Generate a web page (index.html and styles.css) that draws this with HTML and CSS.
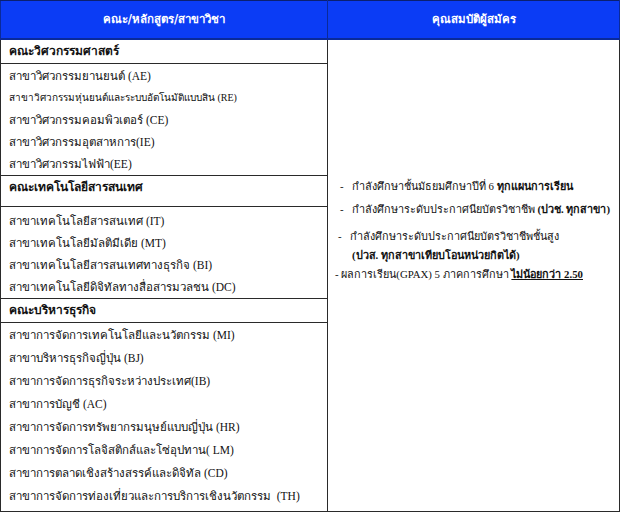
FILE: index.html
```html
<!DOCTYPE html>
<html lang="th">
<head>
<meta charset="utf-8">
<title>คณะ/หลักสูตร/สาขาวิชา</title>
<link rel="stylesheet" href="styles.css">
</head>
<body>
<table class="grid">
  <colgroup><col class="col-left"><col class="col-right"></colgroup>
  <thead>
    <tr>
      <th class="head">คณะ/หลักสูตร/สาขาวิชา</th>
      <th class="head">คุณสมบัติผู้สมัคร</th>
    </tr>
  </thead>
  <tbody>
    <tr>
      <td class="fac"><div class="fac-in">คณะวิศวกรรมศาสตร์</div></td>
      <td class="qual" rowspan="6">
        <ul class="qlist">
          <li class="q1">-&nbsp;&nbsp; กำลังศึกษาชั้นมัธยมศึกษาปีที่ 6 <b>ทุกแผนการเรียน</b></li>
          <li class="q2">-&nbsp;&nbsp; กำลังศึกษาระดับประกาศนียบัตรวิชาชีพ <b>(ปวช. ทุกสาขา)</b></li>
          <li class="q3">-&nbsp;&nbsp; กำลังศึกษาระดับประกาศนียบัตรวิชาชีพชั้นสูง</li>
          <li class="q4"><b>(ปวส. ทุกสาขาเทียบโอนหน่วยกิตได้)</b></li>
          <li class="q5">- ผลการเรียน(GPAX) 5 ภาคการศึกษา <b class="ul">ไม่น้อยกว่า 2.50</b></li>
        </ul>
      </td>
    </tr>
    <tr>
      <td class="progs"><div class="plist eng">
        <div class="p">สาขาวิศวกรรมยานยนต์ (AE)</div>
        <div class="p small">สาขาวิศวกรรมหุ่นยนต์และระบบอัตโนมัติแบบสิน (RE)</div>
        <div class="p">สาขาวิศวกรรมคอมพิวเตอร์ (CE)</div>
        <div class="p">สาขาวิศวกรรมอุตสาหการ(IE)</div>
        <div class="p">สาขาวิศวกรรมไฟฟ้า(EE)</div>
      </div></td>
    </tr>
    <tr>
      <td class="fac"><div class="fac-in tall">คณะเทคโนโลยีสารสนเทศ</div></td>
    </tr>
    <tr>
      <td class="progs"><div class="plist it">
        <div class="p">สาขาเทคโนโลยีสารสนเทศ (IT)</div>
        <div class="p">สาขาเทคโนโลยีมัลติมีเดีย (MT)</div>
        <div class="p">สาขาเทคโนโลยีสารสนเทศทางธุรกิจ (BI)</div>
        <div class="p">สาขาเทคโนโลยีดิจิทัลทางสื่อสารมวลชน (DC)</div>
      </div></td>
    </tr>
    <tr>
      <td class="fac"><div class="fac-in">คณะบริหารธุรกิจ</div></td>
    </tr>
    <tr>
      <td class="progs"><div class="plist biz">
        <div class="p">สาขาการจัดการเทคโนโลยีและนวัตกรรม (MI)</div>
        <div class="p">สาขาบริหารธุรกิจญี่ปุ่น (BJ)</div>
        <div class="p">สาขาการจัดการธุรกิจระหว่างประเทศ(IB)</div>
        <div class="p">สาขาการบัญชี (AC)</div>
        <div class="p">สาขาการจัดการทรัพยากรมนุษย์แบบญี่ปุ่น (HR)</div>
        <div class="p">สาขาการจัดการโลจิสติกส์และโซ่อุปทาน( LM)</div>
        <div class="p">สาขาการตลาดเชิงสร้างสรรค์และดิจิทัล (CD)</div>
        <div class="p">สาขาการจัดการท่องเที่ยวและการบริการเชิงนวัตกรรม&nbsp; (TH)</div>
      </div></td>
    </tr>
  </tbody>
</table>
</body>
</html>
```
FILE: styles.css
```css
html, body {
  margin: 0;
  padding: 0;
  background: #ffffff;
}
body {
  font-family: "Liberation Serif", serif;
  color: #111111;
  font-size: 11.5px;
}
.grid {
  width: 619px;
  border-collapse: collapse;
  table-layout: fixed;
  border: 1px solid #222222;
}
.col-left { width: 327px; }
.col-right { width: 292px; }
.grid th, .grid td {
  padding: 0;
  border: 1px solid #2a2a2a;
  vertical-align: top;
}
.grid .head {
  height: 37px;
  padding: 0;
  background: #0b3cf5;
  color: #ffffff;
  font-family: "DejaVu Sans", sans-serif;
  font-weight: bold;
  font-size: 11.5px;
  line-height: 37px;
  text-align: center;
  vertical-align: middle;
  border-color: #0a2a9a;
  border-top: 1px solid #0a2070;
  border-bottom: 2px solid #0a2a9a;
}
.fac-in {
  height: 23px;
  line-height: 23px;
  padding-left: 8px;
  font-weight: bold;
  font-size: 12px;
  overflow: hidden;
}
.fac-in.tall {
  height: 30px;
  line-height: 22px;
}
.plist {
  padding: 1px 0 0 8px;
}
.plist.it { padding-top: 3px; padding-bottom: 0; }
.plist.biz { padding-top: 1px; padding-bottom: 3px; }
.p {
  height: 22px;
  line-height: 22px;
  white-space: nowrap;
  overflow: hidden;
}
.plist.biz .p { height: 23px; line-height: 23px; }
.p.small { font-size: 10px; }
.qlist {
  list-style: none;
  margin: 0;
  padding: 136px 0 0 0;
  font-size: 10.8px;
}
.qlist li {
  line-height: 20px;
  white-space: nowrap;
}
.q1 { padding-left: 12px; height: 23px; }
.q2 { padding-left: 12px; height: 27px; }
.q3 { padding-left: 10px; height: 19px; }
.q4 { padding-left: 24px; height: 19px; }
.q5 { padding-left: 7px; }
.ul { text-decoration: underline; }
```
